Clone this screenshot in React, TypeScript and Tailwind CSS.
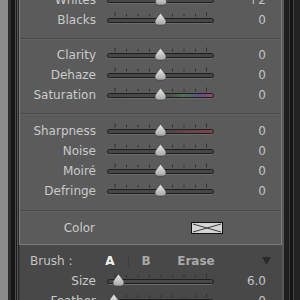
import React from "react";

type TrackKind = "plain" | "saturation" | "sharpness";

interface Row {
  label: string;
  value: string;
  pos: number;
  track?: TrackKind;
}

const TICKS = [8, 19.5, 31, 42.5, 54, 65.5, 77, 88.5, 99.5];

function Slider({ pos, track = "plain" }: { pos: number; track?: TrackKind }) {
  const x = 1 + pos * 105;
  const fill =
    track === "saturation" ? "url(#satGrad)" : track === "sharpness" ? "url(#sharpGrad)" : "#474747";
  return (
    <svg width="107" height="20" viewBox="0 0 107 20" className="block shrink-0">
      <defs>
        <linearGradient id="satGrad" x1="0" x2="1" y1="0" y2="0">
          <stop offset="0" stopColor="#474747" />
          <stop offset="0.55" stopColor="#4a4a4a" />
          <stop offset="0.72" stopColor="#4d7352" />
          <stop offset="0.86" stopColor="#5d4f8c" />
          <stop offset="1" stopColor="#9a4866" />
        </linearGradient>
        <linearGradient id="sharpGrad" x1="0" x2="1" y1="0" y2="0">
          <stop offset="0" stopColor="#474747" />
          <stop offset="0.5" stopColor="#4a4646" />
          <stop offset="1" stopColor="#84414d" />
        </linearGradient>
        <linearGradient id="thumbGrad" x1="0" x2="0" y1="0" y2="1">
          <stop offset="0" stopColor="#ececec" />
          <stop offset="1" stopColor="#a6a6a6" />
        </linearGradient>
      </defs>
      {TICKS.map((t, i) => (
        <line
          key={i}
          x1={t}
          x2={t}
          y1={i === 0 || i === TICKS.length - 1 ? 2.5 : 4}
          y2={6.5}
          stroke="#303030"
          strokeWidth="1"
        />
      ))}
      <rect x="0.5" y="8.5" width="106" height="4" rx="2" fill={fill} stroke="#1f1f1f" />
      <line x1="2" x2="105" y1="13.5" y2="13.5" stroke="#6c6c6c" strokeWidth="1" />
      <g transform={`translate(${x - 5.5},3)`}>
        <path
          d="M5.5 0 L10 6 Q11 7.5 11 9 Q11 12 8 12 L3 12 Q0 12 0 9 Q0 7.5 1 6 Z"
          fill="url(#thumbGrad)"
          stroke="#3a3a3a"
          strokeWidth="0.6"
        />
      </g>
    </svg>
  );
}

function SliderRow({ label, value, pos, track }: Row) {
  return (
    <div className="flex h-[20px] items-center">
      <div className="w-[76px] shrink-0 text-right text-[12px] leading-none text-[#cacaca]">{label}</div>
      <div className="ml-[11px]">
        <Slider pos={pos} track={track} />
      </div>
      <div className="w-[52px] shrink-0 text-right text-[12px] leading-none text-[#c4c4c4]">{value}</div>
    </div>
  );
}

function Separator() {
  return (
    <div>
      <div className="h-px bg-[#4b4b4b]" />
      <div className="h-px bg-[#626262]" />
    </div>
  );
}

const tone: Row[] = [
  { label: "Whites", value: "+2", pos: 0.505 },
  { label: "Blacks", value: "0", pos: 0.5 },
];
const presence: Row[] = [
  { label: "Clarity", value: "0", pos: 0.5 },
  { label: "Dehaze", value: "0", pos: 0.5 },
  { label: "Saturation", value: "0", pos: 0.5, track: "saturation" },
];
const detail: Row[] = [
  { label: "Sharpness", value: "0", pos: 0.5, track: "sharpness" },
  { label: "Noise", value: "0", pos: 0.5 },
  { label: "Moiré", value: "0", pos: 0.5 },
  { label: "Defringe", value: "0", pos: 0.5 },
];

export default function App() {
  return (
    <div className="flex h-[300px] w-[300px] overflow-hidden bg-[#1c1c1c] font-['DejaVu_Sans',sans-serif]">
      {/* left chrome */}
      <div className="flex h-full shrink-0">
        <div className="w-[8px] bg-[#8b8b8b]" />
        <div className="w-[3px] bg-[#2c2c2c]" />
        <div className="w-[4px] bg-[#161616]" />
        <div className="w-px bg-[#4d4d4d]" />
        <div className="w-px bg-[#1b1b1b]" />
        <div className="w-px bg-[#555555]" />
        <div className="w-px bg-[#262626]" />
      </div>

      {/* panel */}
      <div className="flex w-[263px] shrink-0 flex-col">
        <div className="border-x border-b border-[#7a7a7a] bg-[#5b5b5b]">
          <div className="mt-[-10px] pb-[8px]">
            {tone.map((r) => (
              <SliderRow key={r.label} {...r} />
            ))}
          </div>
          <Separator />
          <div className="pt-[5px] pb-[8px]">
            {presence.map((r) => (
              <SliderRow key={r.label} {...r} />
            ))}
          </div>
          <Separator />
          <div className="pt-[6px] pb-[9px]">
            {detail.map((r) => (
              <SliderRow key={r.label} {...r} />
            ))}
          </div>
          <Separator />
          <div className="pt-[6px] pb-[6px]">
            <div className="flex h-[20px] items-center">
              <div className="w-[75px] shrink-0 text-right text-[12px] leading-none text-[#cacaca]">Color</div>
              <div className="ml-[96px] h-[12px] w-[32px] border border-[#111111] bg-[#d6d6d6]">
                <svg width="30" height="10" viewBox="0 0 30 10" className="block">
                  <path d="M1 1 Q15 5 29 9 M1 9 Q15 5 29 1" stroke="#3a3a3a" strokeWidth="1" fill="none" />
                </svg>
              </div>
            </div>
          </div>
        </div>

        <div className="flex-1 border-l border-[#3e3e3e] bg-[#484848] pt-[6px]">
          <div className="flex h-[20px] items-center">
            <div className="w-[79px] shrink-0 pl-[10px] text-[12px] leading-none text-[#c4c4c4]">Brush :</div>
            <div className="w-[22px] text-center text-[12px] font-bold leading-none text-[#f2f2f2]">A</div>
            <div className="flex w-[14px] justify-center">
              <div className="h-[12px] w-px bg-[#3c3c3c]" />
            </div>
            <div className="w-[22px] text-center text-[12px] font-bold leading-none text-[#a9a9a9]">B</div>
            <div className="w-[76px] pl-[2px] text-center text-[12px] font-bold leading-none text-[#a9a9a9]">Erase</div>
            <div className="ml-[29px]">
              <svg width="9" height="8" viewBox="0 0 9 8" className="block">
                <path d="M0 0 L9 0 L4.5 8 Z" fill="#2a2a2a" />
              </svg>
            </div>
          </div>
          <SliderRow label="Size" value="6.0" pos={0.1} />
          <SliderRow label="Feather" value="0" pos={0.056} />
        </div>
      </div>

      {/* right chrome */}
      <div className="flex h-full shrink-0">
        <div className="w-[2px] bg-[#585858]" />
        <div className="w-[5px] bg-[#1f1f1f]" />
        <div className="w-px bg-[#3c3c3c]" />
        <div className="w-[3px] bg-[#151515]" />
        <div className="w-px bg-[#454545]" />
        <div className="w-[6px] bg-[#222222]" />
      </div>
    </div>
  );
}
